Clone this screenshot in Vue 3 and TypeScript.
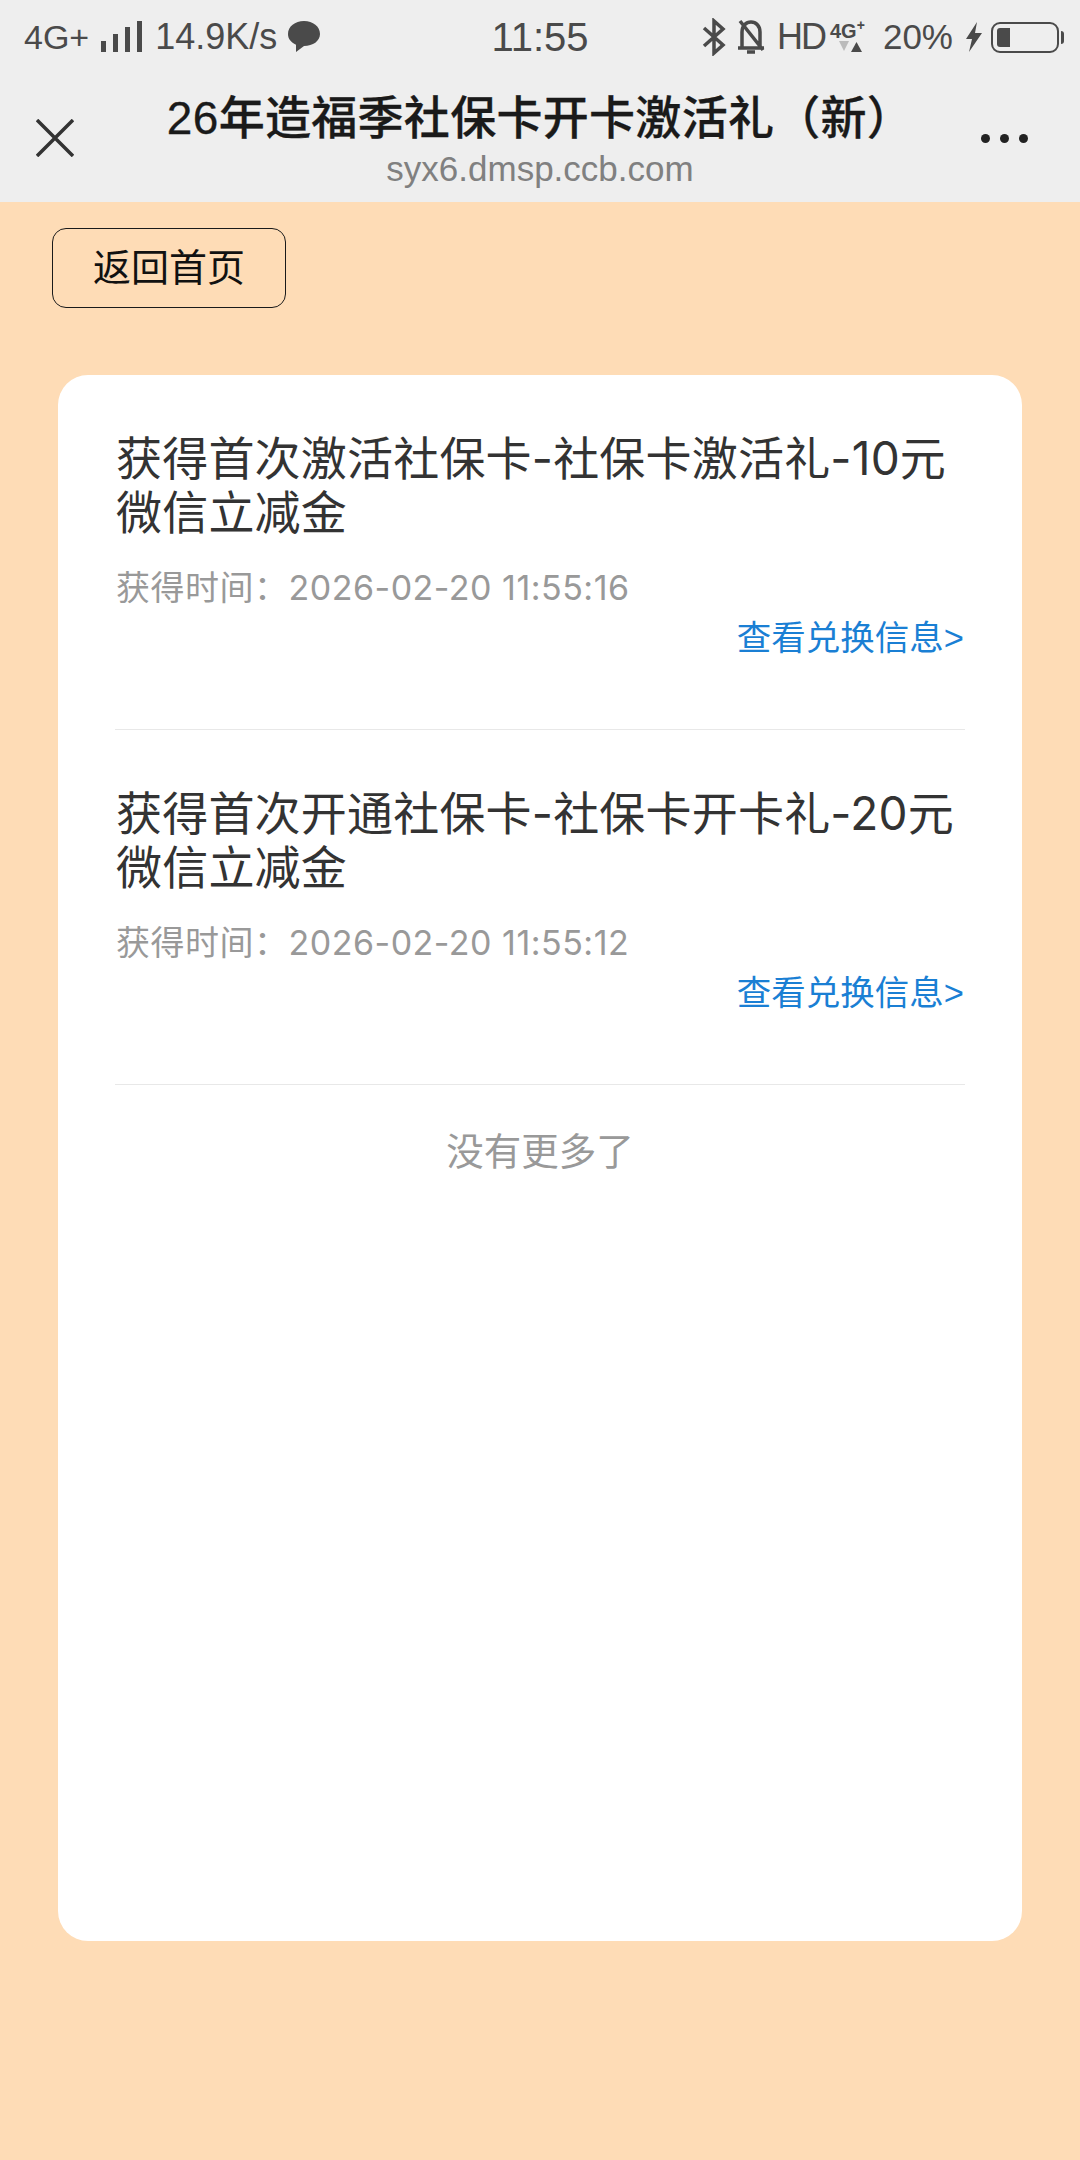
<script setup lang="ts">
import { ref } from "vue";

type Record = { title: string; time: string };

const records = ref<Record[]>([
  { title: "获得首次激活社保卡-社保卡激活礼-10元微信立减金", time: "2026-02-20 11:55:16" },
  { title: "获得首次开通社保卡-社保卡开卡礼-20元微信立减金", time: "2026-02-20 11:55:12" },
]);
</script>

<template>
  <main class="page">
    <header class="top">
      <div class="status">
        <div class="status-left">
          <span>4G+</span>
          <svg class="signal" width="44" height="32" viewBox="0 0 44 32">
            <rect x="0" y="20" width="5" height="11" />
            <rect x="12" y="13" width="5" height="18" />
            <rect x="24" y="6" width="5" height="25" />
            <rect x="36" y="0" width="5" height="31" />
          </svg>
          <span class="speed">14.9K/s</span>
          <svg width="34" height="34" viewBox="0 0 34 34">
            <path d="M17 1C8 1 1 6.500 1 14c0 4.800 3 8.500 8 10.700L9 32l8-6c9 0 16-5 16-12C33 6.500 26 1 17 1z" />
          </svg>
        </div>
        <div class="clock">11:55</div>
        <div class="status-right">
          <svg width="26" height="38" viewBox="0 0 26 38" class="line-icon">
            <path d="M3 10l19 17-9 8V3l9 8L3 28" />
          </svg>
          <svg width="32" height="38" viewBox="0 0 32 38" class="line-icon">
            <path d="M7 29V14c0-6 4-10 9-10s9 4 9 10v15M3 30h26M12 34h8M5 3l23 29" />
          </svg>
          <span class="hd">HD</span>
          <div class="net">
            <span class="net-label">4G<sup>+</sup></span>
            <svg width="24" height="11" viewBox="0 0 24 11">
              <path d="M1 0h10L6 10z" fill="#bbbbbb" />
              <path d="M13 11h11L18.500 1z" />
            </svg>
          </div>
          <span class="battery-text">20%</span>
          <svg width="18" height="30" viewBox="0 0 18 30">
            <path d="M12 0L1 17h6L4 30 17 11h-7z" />
          </svg>
          <div class="battery"><div class="battery-fill"></div></div>
          <div class="battery-tip"></div>
        </div>
      </div>
      <nav class="nav">
        <svg class="close" width="38" height="38" viewBox="0 0 38 38">
          <path d="M1 1l36 36M37 1L1 37" />
        </svg>
        <div class="nav-text">
          <div class="nav-title">26年造福季社保卡开卡激活礼（新）</div>
          <div class="nav-url">syx6.dmsp.ccb.com</div>
        </div>
        <div class="more"><i></i><i></i><i></i></div>
      </nav>
    </header>

    <button class="back">返回首页</button>

    <section class="card">
      <div v-for="(item, index) in records" :key="index" class="item">
        <div class="item-title">{{ item.title }}</div>
        <div class="item-time">获得时间：{{ item.time }}</div>
        <div class="item-link">查看兑换信息&gt;</div>
      </div>
      <div class="no-more">没有更多了</div>
    </section>
  </main>
</template>

<style scoped>
.page {
  min-height: 2160px;
  background: #fedcb6;
  overflow: hidden;
  font-family: "Liberation Sans", "Noto Sans CJK SC", sans-serif;
}

.top {
  height: 202px;
  background: #eeeeee;
}

.status {
  height: 74px;
  padding: 0 16px 0 24px;
  display: grid;
  grid-template-columns: 1fr auto 1fr;
  align-items: center;
  color: #4a4a4a;
  font-size: 34px;
}

.status svg {
  fill: #4a4a4a;
  display: block;
}

.status-left,
.status-right {
  display: flex;
  align-items: center;
}

.status-left {
  gap: 10px;
}

.signal {
  margin-left: 2px;
}

.speed {
  font-size: 36px;
}

.status-right {
  justify-content: flex-end;
  gap: 8px;
}

.clock {
  font-size: 40px;
  margin-right: 8px;
}

.status .line-icon {
  fill: none;
  stroke: #4a4a4a;
  stroke-width: 3.500;
}

.hd {
  font-size: 36px;
  letter-spacing: -2px;
  margin-left: 2px;
}

.net {
  width: 44px;
  margin: 0 1px 0 -3px;
}

.net-label {
  display: block;
  font-size: 20px;
  line-height: 18px;
  font-weight: 700;
  white-space: nowrap;
}

.net-label sup {
  font-size: 14px;
  line-height: 0;
}

.net svg {
  margin: 1px 0 0 8px;
}

.battery-text {
  font-size: 35px;
  margin-right: 4px;
}

.battery {
  width: 68px;
  height: 31px;
  border: 2px solid #4a4a4a;
  border-radius: 9px;
  padding: 4px;
  box-sizing: border-box;
}

.battery-fill {
  width: 13px;
  height: 100%;
  background: #4a4a4a;
  border-radius: 3px 0 0 3px;
}

.battery-tip {
  width: 3px;
  height: 13px;
  margin-left: -6px;
  background: #4a4a4a;
  border-radius: 0 3px 3px 0;
}

.nav {
  display: grid;
  grid-template-columns: 1fr auto 1fr;
  align-items: center;
  height: 128px;
  padding: 0 36px;
}

.close {
  fill: none;
  stroke: #333333;
  stroke-width: 3.500;
}

.nav-text {
  text-align: center;
}

.nav-title {
  font-size: 46px;
  line-height: 60px;
  font-weight: 500;
  letter-spacing: 0.3px;
  color: #1a1a1a;
  -webkit-text-stroke: 0.3px #1a1a1a;
  white-space: nowrap;
}

.nav-url {
  font-size: 35px;
  line-height: 40px;
  margin-top: 1px;
  color: #808080;
}

.more {
  display: flex;
  justify-content: flex-end;
  gap: 10px;
  padding-right: 16px;
}

.more i {
  width: 9px;
  height: 9px;
  border-radius: 50%;
  background: #222222;
}

.back {
  display: block;
  width: 234px;
  height: 80px;
  margin: 26px 0 0 52px;
  padding: 0 0 8px;
  background: transparent;
  border: 1px solid #1a1a1a;
  border-radius: 14px;
  color: #111111;
  font-family: inherit;
  font-size: 38px;
}

.card {
  height: 1566px;
  margin: 67px 58px 0;
  padding: 0 57px;
  box-sizing: border-box;
  background: #ffffff;
  border-radius: 30px;
}

.item {
  padding: 56px 0 66px 1px;
  border-bottom: 1px solid #e8e8e8;
  height: 355px;
  box-sizing: border-box;
}

.item-title {
  font-family: Inter, "Noto Sans CJK SC", sans-serif;
  font-size: 46px;
  line-height: 54px;
  letter-spacing: 0.2px;
  color: #333333;
}

.item-time {
  font-family: Inter, "Noto Sans CJK SC", sans-serif;
  margin-top: 24px;
  font-size: 34px;
  line-height: 50px;
  letter-spacing: 0.5px;
  color: #999999;
}

.item-link {
  font-size: 34.500px;
  line-height: 50px;
  color: #1a7fd4;
  text-align: right;
  padding-right: 1px;
}

.no-more {
  margin-top: 42px;
  font-size: 37.500px;
  line-height: 50px;
  color: #999999;
  text-align: center;
}
</style>
